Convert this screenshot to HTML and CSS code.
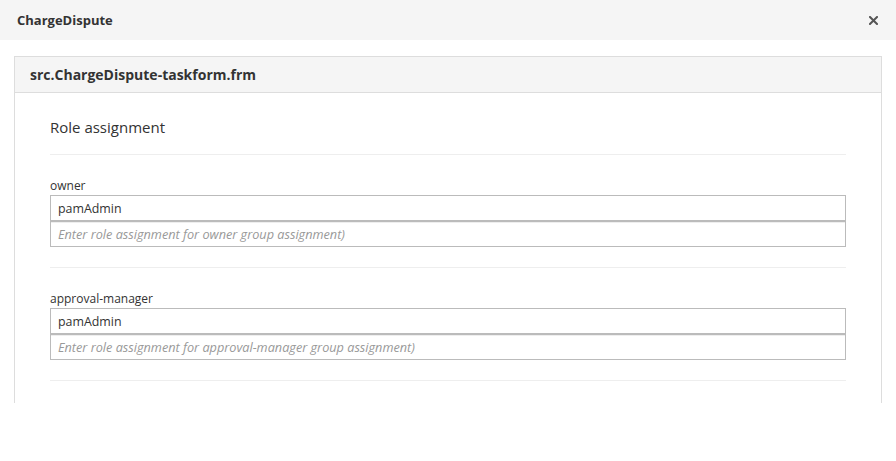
FILE: index.html
```html
<!DOCTYPE html>
<html>
<head>
<meta charset="utf-8">
<link rel="stylesheet" href="styles.css">
</head>
<body>
<div class="modal-header">
  <span class="modal-title">ChargeDispute</span>
  <svg class="close" width="9" height="9" viewBox="0 0 9 9"><path d="M1 1L8 8M8 1L1 8" stroke="#555" stroke-width="2" stroke-linecap="square"/></svg>
</div>
<div class="modal-body">
  <div class="panel">
    <div class="panel-heading">src.ChargeDispute-taskform.frm</div>
    <div class="panel-body">
      <div class="section-title">Role assignment</div>
      <div class="rule"></div>
      <div class="group">
        <label class="group-label">owner</label>
        <div class="field field-value">pamAdmin</div>
        <div class="field field-placeholder">Enter role assignment for owner group assignment)</div>
      </div>
      <div class="rule"></div>
      <div class="group">
        <label class="group-label">approval-manager</label>
        <div class="field field-value">pamAdmin</div>
        <div class="field field-placeholder">Enter role assignment for approval-manager group assignment)</div>
      </div>
      <div class="rule"></div>
    </div>
  </div>
</div>
</body>
</html>
```
FILE: styles.css
```css
html, body {
  margin: 0;
  padding: 0;
  background: #fff;
}
body {
  font-family: "Open Sans", "Liberation Sans", sans-serif;
  color: #333;
}
.modal-header {
  height: 40px;
  background: #f5f5f5;
  display: flex;
  align-items: center;
  justify-content: space-between;
  padding: 0 18px 0 17px;
}
.modal-title {
  font-size: 13px;
  font-weight: 700;
  color: #333;
}
.close {
  display: block;
  margin-top: 1px;
}
.modal-body {
  padding: 16px 14px 0 14px;
}
.panel {
  border: 1px solid #ddd;
  border-bottom: none;
  height: 347px;
  box-sizing: border-box;
}
.panel-heading {
  background: #f5f5f5;
  height: 35px;
  border-bottom: 1px solid #ddd;
  box-sizing: content-box;
  display: flex;
  align-items: center;
  padding: 0 15px;
  font-size: 14px;
  font-weight: 700;
  color: #333;
}
.panel-body {
  padding: 24px 35px 0 35px;
}
.section-title {
  font-size: 15px;
  line-height: 21px;
  color: #333;
}
.rule {
  border-top: 1px solid #eee;
  margin-top: 16px;
}
.group {
  padding-top: 22px;
  padding-bottom: 20px;
}
.group + .rule {
  margin-top: 0;
}
.group-label {
  display: block;
  font-size: 12px;
  line-height: 17px;
  margin-bottom: 1px;
  color: #333;
}
.field {
  height: 24px;
  border: 1px solid #bbb;
  display: flex;
  align-items: center;
  padding: 0 7px;
}
.field-value {
  font-size: 12.4px;
  color: #333;
}
.field-placeholder {
  font-size: 12.7px;
  font-style: italic;
  color: #999;
  box-shadow: inset 0 1px 0 #eee;
}
```
